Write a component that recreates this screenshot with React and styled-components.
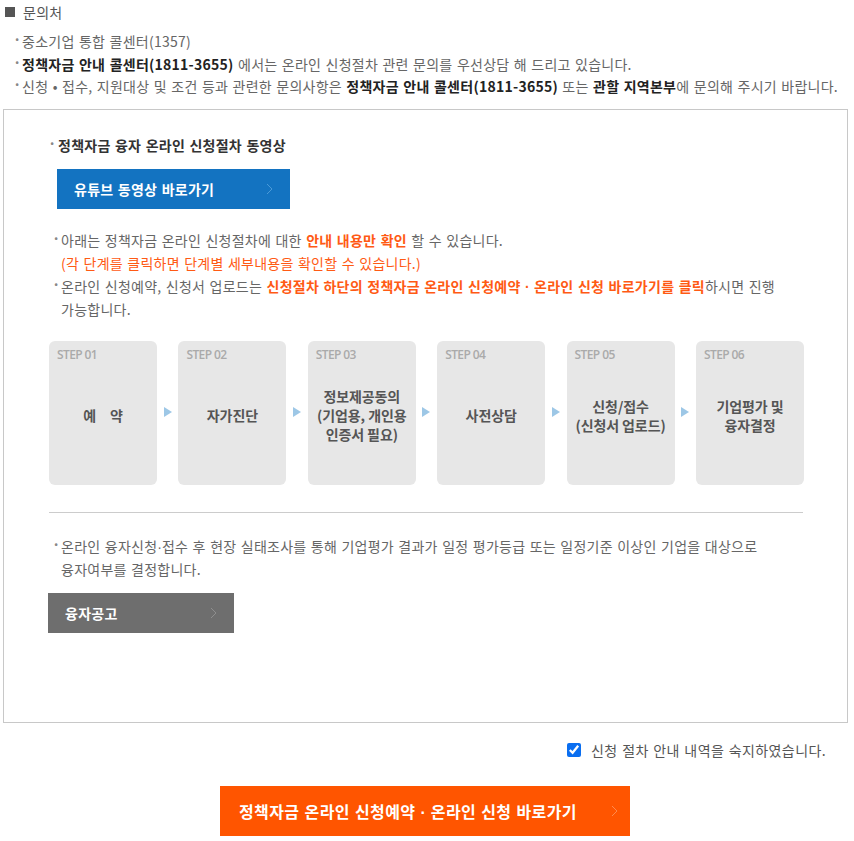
import React, { useState } from 'react';
import styled, { createGlobalStyle } from 'styled-components';

const GlobalStyle = createGlobalStyle`
  body {
    margin: 0;
    background: #fff;
    font-family: "Noto Sans CJK KR", "Noto Sans", sans-serif;
    color: #666;
  }
`;

const steps = [
  { no: '01', label: '예　약' },
  { no: '02', label: '자가진단' },
  { no: '03', label: '정보제공동의\n(기업용, 개인용\n인증서 필요)' },
  { no: '04', label: '사전상담' },
  { no: '05', label: '신청/접수\n(신청서 업로드)' },
  { no: '06', label: '기업평가 및\n융자결정' },
];

const Chevron = ({ color }) => (
  <svg width="7" height="12" viewBox="0 0 7 12">
    <path d="M1 1l5 5-5 5" fill="none" stroke={color} strokeWidth="1" />
  </svg>
);

const Arrow = () => (
  <svg width="8" height="10" viewBox="0 0 8 10">
    <path d="M0 0l8 5-8 5z" fill="#9dc7e6" />
  </svg>
);

const App = () => {
  const [agree, setAgree] = useState(true);
  return (
    <Page>
      <GlobalStyle />
      <Heading>
        <Square />
        문의처
      </Heading>
      <ContactList>
        <Item>중소기업 통합 콜센터(1357)</Item>
        <Item>
          <Strong>정책자금 안내 콜센터(1811-3655)</Strong> 에서는 온라인 신청절차 관련 문의를 우선상담 해 드리고 있습니다.
        </Item>
        <Item>
          신청 • 접수, 지원대상 및 조건 등과 관련한 문의사항은 <Strong>정책자금 안내 콜센터(1811-3655)</Strong> 또는{' '}
          <Strong>관할 지역본부</Strong>에 문의해 주시기 바랍니다.
        </Item>
      </ContactList>

      <Box>
        <Title>정책자금 융자 온라인 신청절차 동영상</Title>
        <LinkButton $bg="#1373c1" $width="233px">
          유튜브 동영상 바로가기
          <Chevron color="#4a9ad8" />
        </LinkButton>

        <Notes>
          <Item>
            아래는 정책자금 온라인 신청절차에 대한 <Orange $bold>안내 내용만 확인</Orange> 할 수 있습니다.
          </Item>
          <Sub>(각 단계를 클릭하면 단계별 세부내용을 확인할 수 있습니다.)</Sub>
          <Item>
            온라인 신청예약, 신청서 업로드는{' '}
            <Orange $bold>
              신청절차 하단의 정책자금 온라인 신청예약 <Dot>·</Dot> 온라인 신청 바로가기를 클릭
            </Orange>
            하시면 진행
            <br />
            가능합니다.
          </Item>
        </Notes>

        <Steps>
          {steps.map((s, i) => (
            <React.Fragment key={s.no}>
              {i > 0 && (
                <ArrowCell>
                  <Arrow />
                </ArrowCell>
              )}
              <Step>
                <StepNo>STEP {s.no}</StepNo>
                <StepLabel>{s.label}</StepLabel>
              </Step>
            </React.Fragment>
          ))}
        </Steps>

        <Divider />

        <Notes $top="22px">
          <Item>
            온라인 융자신청<Dot>·</Dot>접수 후 현장 실태조사를 통해 기업평가 결과가 일정 평가등급 또는 일정기준 이상인
            기업을 대상으로
            <br />
            융자여부를 결정합니다.
          </Item>
        </Notes>
        <LinkButton $bg="#6e6e6e" $width="186px" $indent="17px" $top="12px">
          융자공고
          <Chevron color="#8e8e8e" />
        </LinkButton>
      </Box>

      <AgreeRow>
        <input type="checkbox" checked={agree} onChange={(e) => setAgree(e.target.checked)} />
        신청 절차 안내 내역을 숙지하였습니다.
      </AgreeRow>

      <Bottom>
        <ApplyButton>
          <span>
            정책자금 온라인 신청예약 <Dot>·</Dot> 온라인 신청 바로가기
          </span>
          <Chevron color="#ff8a4d" />
        </ApplyButton>
      </Bottom>
    </Page>
  );
};

const Page = styled.div`
  width: 854px;
  font-size: 14px;
  letter-spacing: 0.25px;
  word-spacing: 1px;
`;

const Dot = styled.span`
  font-family: "Liberation Sans", sans-serif;
  letter-spacing: 0;
  line-height: 0;
`;

const Heading = styled.div`
  display: flex;
  align-items: center;
  gap: 8px;
  padding: 2px 0 0 5px;
  height: 20px;
  font-size: 14px;
  color: #555;
`;

const Square = styled.span`
  width: 10px;
  height: 10px;
  background: #555;
`;

const ContactList = styled.ul`
  list-style: none;
  margin: 8px 0 0;
  padding: 0 0 0 22px;
  line-height: 22.5px;
`;

const Item = styled.li`
  position: relative;
  list-style: none;
  color: #666;
  &::before {
    content: '·';
    position: absolute;
    left: -9px;
    top: -2px;
    color: #888;
    font-weight: 700;
  }
`;

const Strong = styled.b`
  color: #222;
  font-weight: 700;
`;

const Orange = styled.span`
  color: #ff5a14;
  font-weight: ${(p) => (p.$bold ? 700 : 400)};
`;

const Sub = styled.li`
  list-style: none;
  color: #ff5a14;
`;

const Box = styled.div`
  margin: 11px 6px 0 3px;
  border: 1px solid #c8c8c8;
  padding: 24px 44px 89px 44px;
`;

const Title = styled.div`
  position: relative;
  padding-left: 10px;
  color: #333;
  font-weight: 700;
  line-height: 22px;
  &::before {
    content: '·';
    position: absolute;
    left: 0;
    top: -2px;
    color: #888;
  }
`;

const LinkButton = styled.a`
  display: flex;
  align-items: center;
  justify-content: space-between;
  box-sizing: border-box;
  width: ${(p) => p.$width};
  height: 40px;
  margin: ${(p) => (p.$indent ? `${p.$top} 0 0` : '13px 0 0 9px')};
  padding: 0 17px 0 ${(p) => p.$indent || '17px'};
  background: ${(p) => p.$bg};
  color: #fff;
  font-weight: 700;
  font-size: 14px;
  cursor: pointer;
`;

const Notes = styled.ul`
  margin: ${(p) => p.$top || '20px'} 0 0;
  padding: 0 0 0 13px;
  line-height: 23px;
`;

const Steps = styled.div`
  display: flex;
  align-items: stretch;
  margin: 20px 0 0 1px;
`;

const Step = styled.div`
  box-sizing: border-box;
  width: 108px;
  height: 144px;
  flex: none;
  border-radius: 6px;
  background: #e7e7e7;
  padding: 6px 8px 0;
  display: flex;
  flex-direction: column;
`;

const StepNo = styled.div`
  font-family: "Open Sans", "Liberation Sans", sans-serif;
  font-size: 12px;
  font-weight: 600;
  color: #aaa;
  letter-spacing: -0.6px;
  word-spacing: 0;
  line-height: 16px;
`;

const StepLabel = styled.div`
  flex: 1;
  display: flex;
  align-items: center;
  justify-content: center;
  text-align: center;
  white-space: pre;
  margin: 0 -5px;
  color: #555;
  font-weight: 700;
  font-size: 14px;
  letter-spacing: -0.1px;
  word-spacing: 0;
  line-height: 19px;
  padding-bottom: 16px;
`;

const ArrowCell = styled.div`
  width: 21.4px;
  flex: none;
  display: flex;
  align-items: center;
  justify-content: center;
  padding-bottom: 2px;
`;

const Divider = styled.hr`
  margin: 27px 0 0 1px;
  border: 0;
  border-top: 1px solid #ccc;
`;

const AgreeRow = styled.label`
  display: flex;
  align-items: center;
  justify-content: flex-end;
  gap: 10px;
  margin: 17px 28px 0 0;
  color: #555;
  font-size: 14px;
  letter-spacing: 0.4px;
  input {
    width: 14px;
    height: 14px;
    margin: 0;
    accent-color: #0a6ef0;
  }
`;

const Bottom = styled.div`
  display: flex;
  justify-content: center;
  margin-top: 26px;
`;

const ApplyButton = styled.a`
  display: flex;
  align-items: center;
  justify-content: space-between;
  box-sizing: border-box;
  width: 410px;
  height: 50px;
  margin-right: 4px;
  padding: 0 12px 0 19px;
  background: #ff5500;
  color: #fff;
  font-weight: 700;
  font-size: 16px;
  letter-spacing: 0.4px;
  cursor: pointer;
`;

export default App;
